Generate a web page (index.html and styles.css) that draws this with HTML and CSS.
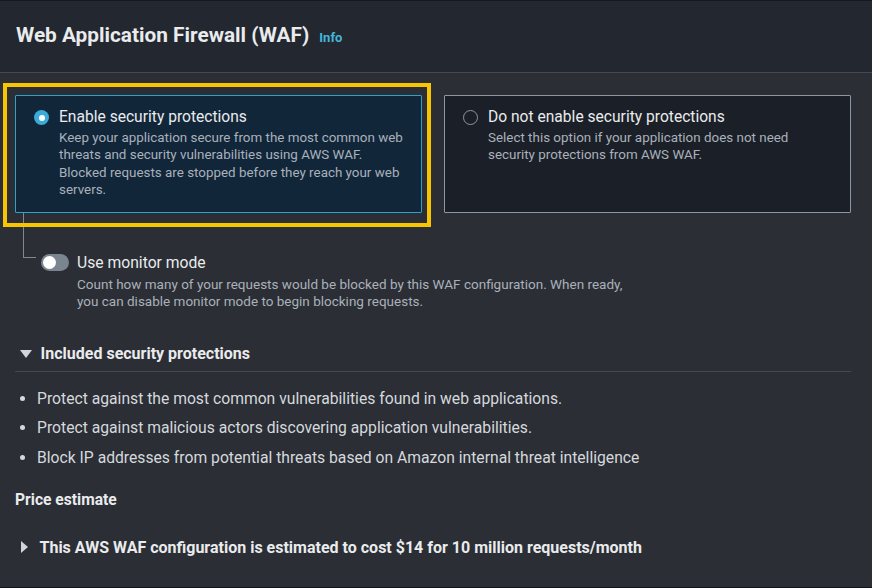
FILE: index.html
```html
<!DOCTYPE html>
<html lang="en">
<head>
<meta charset="utf-8">
<title>Web Application Firewall (WAF)</title>
<link rel="stylesheet" href="styles.css">
</head>
<body>
<div class="page">
  <header class="header">
    <h2 class="title">Web Application Firewall (WAF)</h2>
    <a class="info" href="#">Info</a>
  </header>

  <main class="content">
    <div class="tiles">
      <label class="tile tile-selected">
        <span class="highlight"></span>
        <span class="radio radio-on"></span>
        <span class="tile-text">
          <span class="tile-title">Enable security protections</span>
          <span class="tile-desc">Keep your application secure from the most common web threats and security vulnerabilities using AWS WAF. Blocked requests are stopped before they reach your web servers.</span>
        </span>
      </label>
      <label class="tile">
        <span class="radio"></span>
        <span class="tile-text">
          <span class="tile-title">Do not enable security protections</span>
          <span class="tile-desc">Select this option if your application does not need security protections from AWS WAF.</span>
        </span>
      </label>
    </div>

    <div class="monitor">
      <span class="connector"></span>
      <span class="toggle"><span class="knob"></span></span>
      <div class="monitor-text">
        <div class="monitor-title">Use monitor mode</div>
        <div class="monitor-desc">Count how many of your requests would be blocked by this WAF configuration. When ready, you can disable monitor mode to begin blocking requests.</div>
      </div>
    </div>

    <section class="expander">
      <div class="expander-head">
        <span class="caret-down"></span>
        <span class="expander-title">Included security protections</span>
      </div>
      <ul class="bullets">
        <li>Protect against the most common vulnerabilities found in web applications.</li>
        <li>Protect against malicious actors discovering application vulnerabilities.</li>
        <li>Block IP addresses from potential threats based on Amazon internal threat intelligence</li>
      </ul>
    </section>

    <h3 class="price-label">Price estimate</h3>
    <div class="price-row">
      <span class="caret-right"></span>
      <span class="price-text">This AWS WAF configuration is estimated to cost $14 for 10 million requests/month</span>
    </div>
  </main>
</div>
</body>
</html>
```
FILE: styles.css
```css
* { box-sizing: border-box; }

html, body {
  margin: 0;
  padding: 0;
  background: #2b2e34;
}

body {
  font-family: Roboto, "Liberation Sans", sans-serif;
  color: #e9ebed;
}

.page {
  height: 588px;
  border-bottom: 1px solid #121418;
  overflow: hidden;
}

/* Header */
.header {
  height: 73px;
  background: #23272f;
  border-top: 1px solid #15181d;
  border-bottom: 1px solid #434852;
  padding: 20px 16px 0 16px;
  display: flex;
  align-items: baseline;
}

.title {
  margin: 0;
  font-size: 20.8px;
  line-height: 28px;
  font-weight: 700;
  color: #e9ebed;
}

.info {
  margin-left: 10px;
  font-size: 13px;
  font-weight: 700;
  color: #44b6da;
  text-decoration: none;
}

/* Content */
.content {
  padding: 22px 21px 0 15px;
}

.tiles {
  display: flex;
  gap: 22px;
}

.tile {
  position: relative;
  flex: 0 0 407px;
  height: 118px;
  display: flex;
  align-items: flex-start;
  gap: 10px;
  padding: 11px 10px 0 18px;
  border: 1px solid #8d97a2;
  border-radius: 1px;
  background: #1b1f27;
}

.tile-selected {
  border-color: #2ba3cf;
  background: #12263a;
}

.highlight {
  position: absolute;
  left: -13px;
  top: -13px;
  right: -10px;
  bottom: -15px;
  border: 4px solid #f7c600;
  pointer-events: none;
}

.radio {
  flex: none;
  width: 15px;
  height: 15px;
  margin-top: 3px;
  border-radius: 50%;
  border: 1.5px solid #8d97a2;
}

.radio-on {
  border: none;
  background: #3aacd7;
  display: flex;
  align-items: center;
  justify-content: center;
}

.radio-on::after {
  content: "";
  width: 6px;
  height: 6px;
  border-radius: 50%;
  background: #ffffff;
}

.tile-text {
  display: flex;
  flex-direction: column;
  max-width: 346px;
}

.tile-title {
  font-size: 15.6px;
  line-height: 20px;
  color: #e9ebed;
}

.tile-desc {
  margin-top: 2px;
  font-size: 13.4px;
  line-height: 17.25px;
  color: #a9b1bb;
}

/* Monitor mode */
.monitor {
  display: flex;
  align-items: flex-start;
  margin-left: 8px;
}

.connector {
  flex: none;
  width: 13px;
  height: 45px;
  border-left: 1px solid #7d8893;
  border-bottom: 1px solid #7d8893;
}

.toggle {
  flex: none;
  width: 28px;
  height: 17px;
  margin: 41px 0 0 5px;
  border-radius: 9px;
  background: #7b8590;
  display: flex;
  align-items: center;
  padding-left: 2px;
}

.knob {
  width: 13px;
  height: 13px;
  border-radius: 50%;
  background: #ffffff;
}

.monitor-text {
  margin: 40px 0 0 8px;
  max-width: 560px;
}

.monitor-title {
  font-size: 15.7px;
  line-height: 20px;
  color: #e9ebed;
}

.monitor-desc {
  margin-top: 3px;
  font-size: 13.5px;
  line-height: 17.3px;
  color: #a9b1bb;
}

/* Expander */
.expander {
  margin-top: 32px;
}

.expander-head {
  display: flex;
  align-items: center;
  padding-left: 5px;
  border-bottom: 1px solid #434852;
  padding-bottom: 6px;
  box-sizing: content-box;
  height: 22px;
}

.caret-down {
  width: 0;
  height: 0;
  border-left: 6px solid transparent;
  border-right: 6px solid transparent;
  border-top: 8px solid #d1d5db;
  margin-right: 8.6px;
}

.expander-title,
.price-text {
  font-size: 16px;
  font-weight: 700;
  color: #e9ebed;
}

.bullets {
  list-style: none;
  margin: 12px 0 0 0;
  padding: 0;
}

.bullets li {
  display: flex;
  align-items: center;
  font-size: 15.7px;
  line-height: 29.5px;
  color: #d5d9de;
}

.bullets li::before {
  content: "";
  flex: none;
  width: 5px;
  height: 5px;
  border-radius: 50%;
  background: #d5d9de;
  margin: 0 12px 0 5px;
}

.price-label {
  margin: 18px 0 0 0;
  font-size: 15.6px;
  line-height: 20px;
  font-weight: 700;
  color: #e9ebed;
}

.price-row {
  display: flex;
  align-items: center;
  margin-top: 27px;
  height: 20px;
}

.caret-right {
  width: 0;
  height: 0;
  border-top: 6px solid transparent;
  border-bottom: 6px solid transparent;
  border-left: 7px solid #d1d5db;
  margin: 0 11.5px 0 6px;
}
```
